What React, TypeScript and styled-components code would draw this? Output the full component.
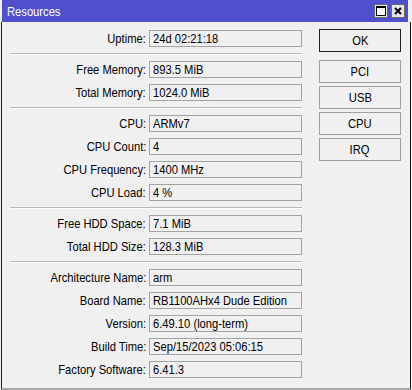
import styled, { createGlobalStyle } from 'styled-components';

const GlobalStyle = createGlobalStyle`
  html, body {
    margin: 0;
    padding: 0;
    background: #f0f0f0;
  }
  body {
    font-family: "Liberation Sans", Arial, sans-serif;
    font-size: 13px;
    color: #000;
  }
`;

type Row = { label: string; value: string };

const sections: Row[][] = [
  [{ label: 'Uptime', value: '24d 02:21:18' }],
  [
    { label: 'Free Memory', value: '893.5 MiB' },
    { label: 'Total Memory', value: '1024.0 MiB' },
  ],
  [
    { label: 'CPU', value: 'ARMv7' },
    { label: 'CPU Count', value: '4' },
    { label: 'CPU Frequency', value: '1400 MHz' },
    { label: 'CPU Load', value: '4 %' },
  ],
  [
    { label: 'Free HDD Space', value: '7.1 MiB' },
    { label: 'Total HDD Size', value: '128.3 MiB' },
  ],
  [
    { label: 'Architecture Name', value: 'arm' },
    { label: 'Board Name', value: 'RB1100AHx4 Dude Edition' },
    { label: 'Version', value: '6.49.10 (long-term)' },
    { label: 'Build Time', value: 'Sep/15/2023 05:06:15' },
    { label: 'Factory Software', value: '6.41.3' },
  ],
];

const buttons = ['PCI', 'USB', 'CPU', 'IRQ'];

export default function App() {
  return (
    <>
      <GlobalStyle />
      <Window>
        <TitleBar>
          <Title $origin="left">Resources</Title>
          <TitleButtons>
            <TitleButton aria-label="maximize">
              <svg width="12" height="12" viewBox="0 0 12 12">
                <rect x="1.5" y="1.5" width="9" height="9" fill="#fff" stroke="#000" strokeWidth="1" />
                <line x1="1.5" y1="2.5" x2="10.5" y2="2.5" stroke="#000" strokeWidth="1" />
              </svg>
            </TitleButton>
            <TitleButton aria-label="close">
              <svg width="12" height="12" viewBox="0 0 12 12">
                <path d="M3 3 L9 9 M9 3 L3 9" stroke="#000" strokeWidth="2" />
              </svg>
            </TitleButton>
          </TitleButtons>
        </TitleBar>
        <Body>
          <Form>
            {sections.map((rows, i) => (
              <Section key={i}>
                {i > 0 && <Separator />}
                {rows.map(r => (
                  <FieldRow key={r.label}>
                    <Label>
                      <Text $origin="right">{r.label}:</Text>
                    </Label>
                    <Field>
                      <Text $origin="left">{r.value}</Text>
                    </Field>
                  </FieldRow>
                ))}
              </Section>
            ))}
          </Form>
          <Buttons>
            <Button $default>
              <Text $origin="center">OK</Text>
            </Button>
            {buttons.map(b => (
              <Button key={b}>
                <Text $origin="center">{b}</Text>
              </Button>
            ))}
          </Buttons>
        </Body>
      </Window>
    </>
  );
}

// the dialog font is narrow; squeeze Liberation Sans to match
const Text = styled.span<{ $origin: 'left' | 'right' | 'center' }>`
  display: inline-block;
  white-space: nowrap;
  transform: scaleX(0.86);
  transform-origin: ${p => p.$origin} center;
`;

const Window = styled.div`
  width: 412px;
  height: 390px;
  display: flex;
  flex-direction: column;
  background: #f0f0f0;
`;

const TitleBar = styled.div`
  height: 22px;
  margin: 0 4px 0 2px;
  background: #5050cf;
  display: flex;
  align-items: center;
  justify-content: space-between;
  padding: 0 3px 0 5px;
`;

const Title = styled(Text)`
  color: #fff;
  font-size: 13px;
`;

const TitleButtons = styled.div`
  display: flex;
  gap: 3px;
`;

const TitleButton = styled.div`
  width: 14px;
  height: 14px;
  box-sizing: border-box;
  background: #e6e6e6;
  border: 1px solid #6a6a6a;
  display: flex;
  align-items: center;
  justify-content: center;
`;

const Body = styled.div`
  flex: 1;
  margin-left: 1px;
  margin-right: 1px;
  border-left: 1px solid #1a1a1a;
  border-right: 1px solid #1a1a1a;
  border-bottom: 2px solid #a8a8a8;
  padding: 7px 0 0 8px;
  display: flex;
  gap: 17px;
  align-items: flex-start;
`;

const Form = styled.div`
  width: 292px;
  padding-top: 1px;
  display: flex;
  flex-direction: column;
  gap: 6px;
`;

const Section = styled.div`
  display: flex;
  flex-direction: column;
  gap: 6px;
`;

const Separator = styled.div`
  height: 0;
  border-top: 1px solid #b9b9b9;
  border-bottom: 1px solid #fcfcfc;
`;

const FieldRow = styled.div`
  display: grid;
  grid-template-columns: 136px 153px;
  column-gap: 3px;
  align-items: center;
`;

const Label = styled.div`
  text-align: right;
  white-space: nowrap;
`;

const Field = styled.div`
  height: 17px;
  box-sizing: border-box;
  border: 1px solid #a3a3a3;
  background: #f0f0f0;
  padding: 0 3px;
  line-height: 15px;
  white-space: nowrap;
  overflow: hidden;
`;

const Buttons = styled.div`
  width: 82px;
  display: flex;
  flex-direction: column;
  gap: 3px;
`;

const Button = styled.div<{ $default?: boolean }>`
  height: 23px;
  box-sizing: border-box;
  border: 1px solid ${p => (p.$default ? '#1e1e1e' : '#a0a0a0')};
  background: #f0f0f0;
  display: flex;
  align-items: center;
  justify-content: center;
  margin-bottom: ${p => (p.$default ? '5px' : '0')};
`;
